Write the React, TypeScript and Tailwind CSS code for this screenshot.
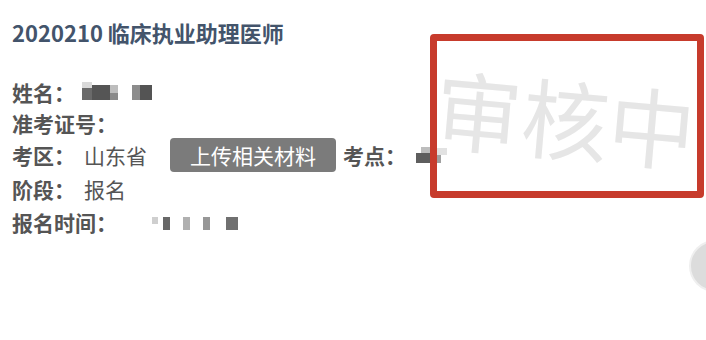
import React from "react";

const font = {
  fontFamily: '"Noto Sans CJK SC", "Noto Sans", sans-serif',
};

function Mosaic({ blocks }: { blocks: [number, number, number, number, string][] }) {
  // x, y, w, h, colour — a blurred (pixelated) value
  const w = Math.max(...blocks.map((b) => b[0] + b[2]));
  const h = Math.max(...blocks.map((b) => b[1] + b[3]));
  return (
    <span className="relative inline-block" style={{ width: w, height: h }}>
      {blocks.map(([x, y, bw, bh, c], i) => (
        <span
          key={i}
          className="absolute"
          style={{ left: x, top: y, width: bw, height: bh, background: c }}
        />
      ))}
    </span>
  );
}

function Row({
  label,
  className,
  children,
}: {
  label: string;
  className: string;
  children?: React.ReactNode;
}) {
  return (
    <div className={`flex items-center ${className}`}>
      <span className="font-bold text-[21px] leading-none text-[#555555]">{label}</span>
      {children}
    </div>
  );
}

export default function App() {
  return (
    <div
      className="relative w-[706px] h-[340px] overflow-hidden bg-white"
      style={font}
    >
      <div className="pl-[12px] pt-[17px]">
        <div className="h-[30px] flex items-center font-bold text-[22px] text-[#43546b] leading-none">
          2020210 临床执业助理医师
        </div>
        <div className="mt-[30px] flex flex-col">
          <Row label="姓名：" className="h-[31px]">
            <span className="ml-[7px]">
              <Mosaic
                blocks={[
                  [0, 0, 10, 6, "#d9d9d9"],
                  [0, 6, 10, 12, "#6a6a6a"],
                  [10, 3, 18, 15, "#555555"],
                  [28, 3, 8, 8, "#bdbdbd"],
                  [28, 11, 8, 7, "#8a8a8a"],
                  [50, 3, 8, 15, "#8c8c8c"],
                  [58, 3, 12, 15, "#545454"],
                ]}
              />
            </span>
          </Row>
          <Row label="准考证号：" className="h-[30px]" />
          <Row label="考区：" className="h-[34px]">
            <span className="ml-[9px] text-[21px] leading-none text-[#555555]">山东省</span>
            <span className="ml-[23px] h-[34px] px-[20px] flex items-center rounded-[4px] bg-[#7b7b7b] text-white text-[21px] leading-none">
              上传相关材料
            </span>
            <span className="ml-[7px] font-bold text-[21px] leading-none text-[#555555]">考点：</span>
            <span className="ml-[10px] mt-[2px]">
              <Mosaic
                blocks={[
                  [5, 0, 10, 6, "#bdbdbd"],
                  [0, 6, 17, 10, "#5e5e5e"],
                  [17, 1, 14, 7, "#e2e2e2"],
                  [17, 8, 8, 8, "#a0a0a0"],
                ]}
              />
            </span>
          </Row>
          <Row label="阶段：" className="h-[35px]">
            <span className="ml-[9px] text-[21px] leading-none text-[#555555]">报名</span>
          </Row>
          <Row label="报名时间：" className="h-[31px]">
            <span className="ml-[35px]">
              <Mosaic
                blocks={[
                  [0, 0, 6, 7, "#cfcfcf"],
                  [11, 0, 7, 13, "#686868"],
                  [31, 0, 7, 13, "#b0b0b0"],
                  [51, 0, 7, 13, "#979797"],
                  [74, 0, 12, 13, "#707070"],
                ]}
              />
            </span>
          </Row>
        </div>
      </div>

      {/* review stamp */}
      <div className="absolute left-[430px] top-[34px] w-[274px] h-[164px] border-[7px] border-[#c73b2c] rounded-[4px] overflow-hidden flex items-center justify-center">
        <span className="text-[87px] leading-none text-[#e6e6e6] rotate-[5deg] whitespace-nowrap -ml-[4px]">
          审核中
        </span>
      </div>

      {/* floating round button, cut off at the edge */}
      <div className="absolute left-[689px] top-[240px] w-[52px] h-[52px] rounded-full bg-[#dcdcdc] border-2 border-[#efefef]" />
    </div>
  );
}
